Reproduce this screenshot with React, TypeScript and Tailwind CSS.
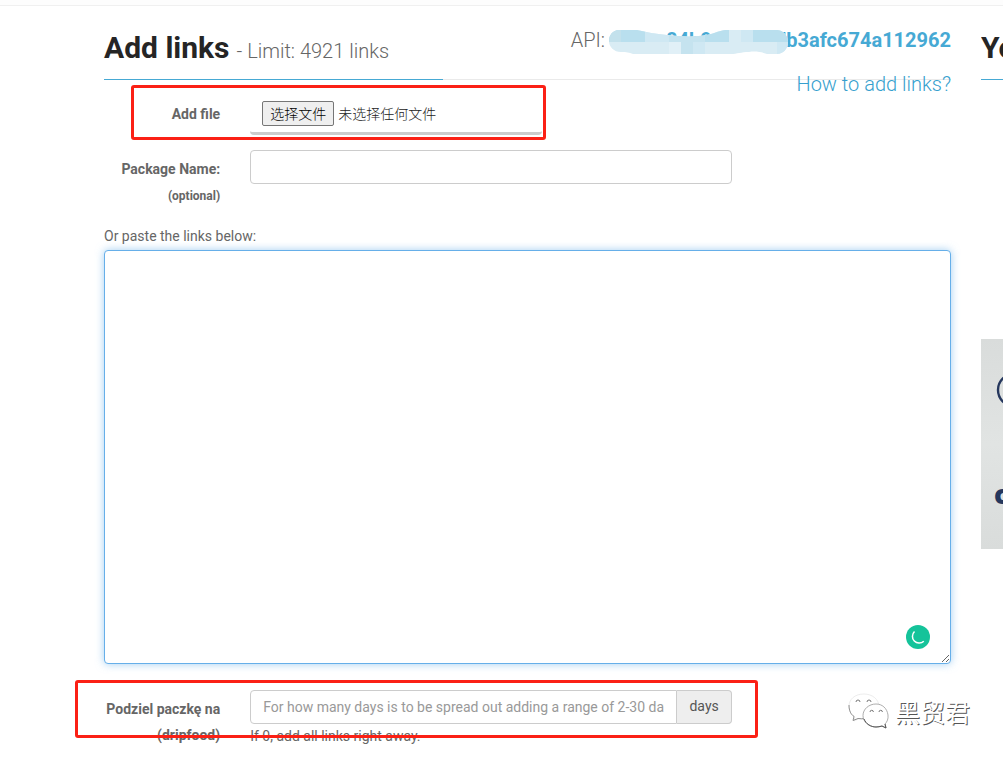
import React from "react";

const labelClass = "col-span-2 text-right font-bold text-[14px] leading-[26px] text-[#666]";

function MaskedKey() {
  return (
    <span className="relative z-10 inline-block w-[178px] text-left">
      <span className="pl-[57px]">84b9</span>
      <svg
        className="absolute left-0 top-[2px] h-6 w-[180px]"
        viewBox="0 0 180 24"
        aria-hidden="true"
      >
        <defs>
          <clipPath id="brush">
            <path d="M10 0H28C38 2 46 4 58 5C74 7 92 7 102 4C109 2 112 0 119 0H168A11.500 11.500 0 0 1 179 12C179 19 174 24 168 24H158C152 22 147 21 140 22C132 22 128 24 122 24H24C18 22 16 22 12 22C5 22 0 17 0 11C0 5 4 0 10 0Z" />
          </clipPath>
        </defs>
        <g clipPath="url(#brush)">
          <path fill="#d9ecf4" d="M0 0h180v24H0z" />
          <path fill="#b9dfee" d="M0 0h36v12H0zM96 0h24v12H96zM144 0h36v12h-36z" />
          <path fill="#c3e1ec" d="M0 0h12v12H0z" />
          <path fill="#c5e3ef" d="M60 0h36v12H60zM72 12h12v12H72z" />
          <path fill="#cfe8f3" d="M36 0h24v12H36zM132 0h12v12h-12zM84 12h12v12H84zM168 12h12v12h-12z" />
          <path fill="#e1f0f7" d="M60 12h12v12H60z" />
        </g>
      </svg>
    </span>
  );
}

function Banner() {
  return (
    <div className="relative h-[210px] overflow-hidden bg-linear-to-b from-[#d9dcdb] via-[#e1e4e3] to-[#d9dcdb]">
      <svg className="absolute left-[15px] top-8 h-9 w-9" viewBox="0 0 36 36" aria-hidden="true">
        <circle cx="18" cy="19" r="16" fill="none" stroke="#25375d" strokeWidth="2.400" />
      </svg>
      <span className="absolute left-[13px] top-[135px] font-['Open_Sans',sans-serif] text-[27px] font-extrabold leading-10 text-[#25375d]">
        c
      </span>
    </div>
  );
}

function Watermark() {
  return (
    <div className="absolute right-[33px] top-[691px] flex items-center gap-[6px]">
      <svg className="h-10 w-[42px]" viewBox="0 0 42 40" fill="#fff" aria-hidden="true">
        <path
          d="M17 3C8 3 2 8 2 15.500C2 20 4 23.500 8 26L7 30L12 27.500C15 28.500 18 28 19 28C22 28 31 24 32 16C32 8 25 3 17 3Z"
          stroke="#e4e4e4"
          strokeWidth=".7"
        />
        <path d="M2 14C2 20 4 23.500 7 25.500L6 29.500L11 27.500Q15 28 17 27.500" fill="none" stroke="#777" strokeWidth=".8" />
        <path
          d="M29 13C22 13 16 18 16 24.500C16 31 22 36 29 36C31 36 33 35.500 35 35L39 37L38 33C40 31 41.500 28 41 24C40 17 35 13 29 13Z"
          stroke="#999"
          strokeWidth=".8"
        />
        <path d="M17 28C19 33 24 36 29 36Q32 36 35 35L39 37L38 33" fill="none" stroke="#555" strokeWidth="1" />
        <path
          d="M9 11a2 2 0 0 1 4 0M20 11a2 2 0 0 1 4 0M23 21a1.700 1.700 0 0 1 3.400 0M32 21a1.700 1.700 0 0 1 3.400 0"
          fill="none"
          stroke="#777"
          strokeWidth="1"
        />
      </svg>
      <span className="font-['Noto_Sans_CJK_SC',sans-serif] text-[25px] leading-10 text-white [text-shadow:1px_1px_0_#555]">
        黑贸君
      </span>
    </div>
  );
}

export default function App() {
  return (
    <div className="relative min-h-screen overflow-hidden bg-white font-[Roboto,'Noto_Sans_CJK_SC',sans-serif] text-[14px] text-[#666]">
      <div className="h-[6px] border-b border-[#f0f0f0] bg-[#fdfdfd]" />
      <div className="flex gap-[30px] pl-[104px]">
        <main className="min-w-0 flex-1">
          <header className="flex h-[74px] items-start justify-between border-b border-[#eaeaea]">
            <h1 className="flex h-[74px] w-2/5 items-start gap-[7px] whitespace-nowrap border-b border-[#46a9d4] pt-5 text-[30px] font-bold leading-[44px] text-[#252525]">
              Add links
              <small className="pt-[3px] text-[20px] font-light text-[#666]">- Limit: 4921 links</small>
            </h1>
            <div className="whitespace-nowrap pt-3 text-right text-[20px]">
              <div className="flex h-11 items-center justify-end font-light text-[#666]">
                API:
                <strong className="ml-1 flex items-center leading-6 font-bold text-[#46a9d4]">
                  <MaskedKey />
                  <span className="-ml-3">db3afc674a112962</span>
                </strong>
              </div>
              <a href="#help" className="block font-light leading-[44px] text-[#369fce]">
                How to add links?
              </a>
            </div>
          </header>

          <form>
            <div className="relative mt-5 grid grid-cols-12 gap-x-[30px]">
              <label htmlFor="file" className={labelClass + " pt-px"}>
                Add file
              </label>
              <div className="relative flex h-[35px] w-[292px] items-start gap-1 rounded-b border-b-[3px] border-[#ccc] pl-3 pt-px font-['Noto_Sans_CJK_SC',sans-serif] font-light text-[#222]">
                <span className="h-[25px] rounded-[2px] border border-[#767676] bg-[#efefef] px-[7px] leading-[23px] text-black">
                  选择文件
                </span>
                <span className="leading-[25px]">未选择任何文件</span>
                <input id="file" type="file" className="absolute inset-0 h-full w-full cursor-pointer opacity-0" />
              </div>
              <div className="pointer-events-none absolute -top-[15px] left-[27px] h-[55px] w-[415px] rounded-[3px] border-3 border-[#fb2015]" />
            </div>

            <div className="mt-[15px] grid grid-cols-12 gap-x-[30px]">
              <label htmlFor="name" className={labelClass + " pt-[6px]"}>
                Package Name:
                <small className="block text-[12px] leading-[28px]">(optional)</small>
              </label>
              <input
                id="name"
                type="text"
                className="col-span-7 h-[34px] min-w-0 rounded border border-[#ccc] bg-white px-3 outline-none"
              />
            </div>

            <label htmlFor="links" className="mt-4 block leading-[20px]">
              Or paste the links below:
            </label>
            <div className="relative mt-1">
              <textarea
                id="links"
                className="block h-[414px] w-full resize rounded border border-[#66afe9] bg-white px-3 py-1.5 shadow-[0_0_8px_rgba(102,175,233,0.6)] outline-none"
              />
              <svg className="absolute bottom-[15px] right-[21px] h-6 w-6" viewBox="0 0 24 24" aria-hidden="true">
                <circle cx="12" cy="12" r="12" fill="#15c39a" />
                <path d="M8.500 6.500A6.500 6.500 0 1 0 17.800 16.200" fill="none" stroke="#fff" strokeWidth="1.500" />
              </svg>
            </div>

            <div className="relative mt-[26px] grid grid-cols-12 gap-x-[30px]">
              <label htmlFor="days" className={labelClass + " pt-[6px]"}>
                Podziel paczkę na (dripfood)
              </label>
              <div className="col-span-7">
                <div className="flex h-[34px]">
                  <input
                    id="days"
                    type="text"
                    placeholder="For how many days is to be spread out adding a range of 2-30 days"
                    className="min-w-0 flex-1 rounded-l border border-[#ccc] bg-white px-3 outline-none placeholder:text-[#999]"
                  />
                  <span className="rounded-r border border-l-0 border-[#ccc] bg-[#eee] px-3 leading-[30px] text-[#555]">
                    days
                  </span>
                </div>
                <p className="mt-[2px] leading-[20px]">If 0, add all links right away.</p>
              </div>
              <div className="pointer-events-none absolute -left-[29px] -top-[10px] h-[58px] w-[683px] rounded-[3px] border-3 border-[#fb2015]" />
            </div>
          </form>
        </main>

        <aside className="w-[22px] shrink-0 overflow-hidden">
          <h2 className="h-[74px] border-b border-[#46a9d4] pt-5 text-[30px] font-bold leading-[44px] text-[#252525]">
            Yo
          </h2>
          <div className="mt-[259px]">
            <Banner />
          </div>
        </aside>
      </div>
      <Watermark />
    </div>
  );
}
